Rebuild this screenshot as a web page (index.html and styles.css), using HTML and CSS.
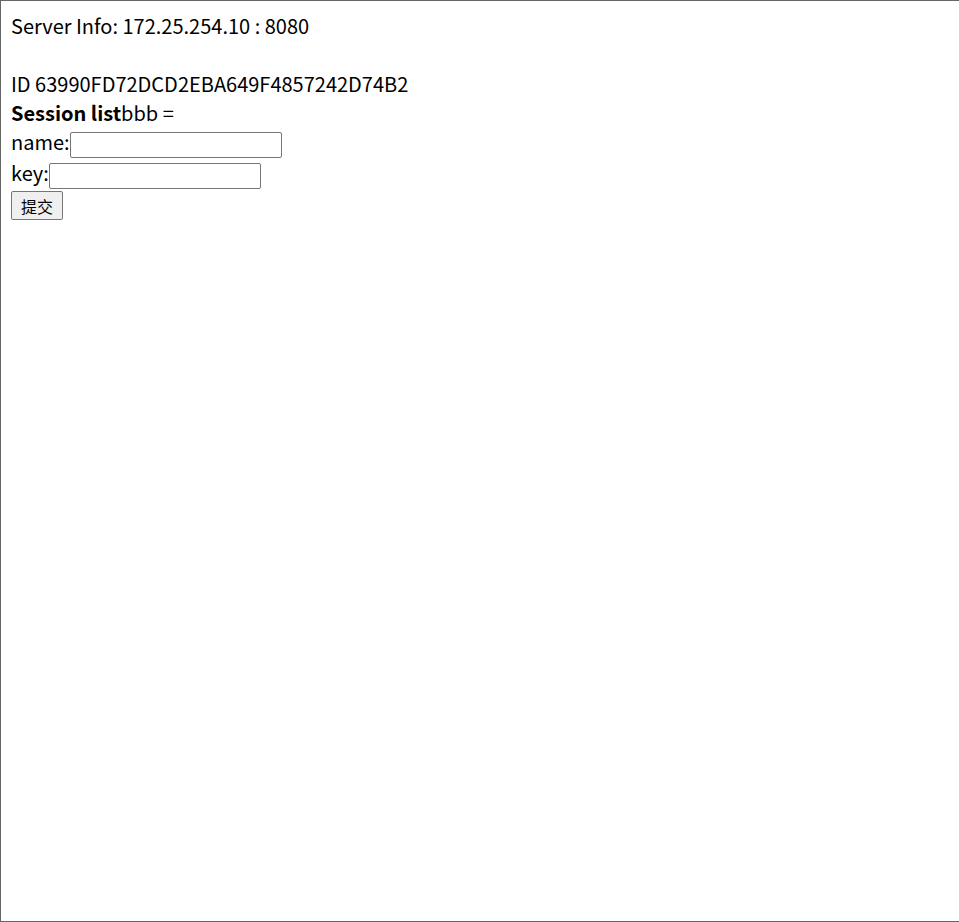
FILE: index.html
```html
<!DOCTYPE html>
<html lang="zh">

<head>
    <meta charset="UTF-8">
    <title>Session</title>
    <link rel="stylesheet" href="styles.css">
</head>

<body>
    <div class="frame">
        <p class="server-info">Server Info: 172.25.254.10 : 8080</p>
        <br>
        ID 63990FD72DCD2EBA649F4857242D74B2<br>
        <b>Session list</b>bbb =<br>
        <form class="session-form" action="#" method="post">
            <div class="field-row">name:<input type="text" name="name" class="text-input"></div>
            <div class="field-row">key:<input type="text" name="key" class="text-input"></div>
            <input type="submit" value="提交" class="submit-btn">
        </form>
    </div>
</body>

</html>
```

FILE: styles.css
```css
/* --- page frame --- */
html,
body {
    margin: 0;
    height: 100%;
    background: #fff;
}

.frame {
    box-sizing: border-box;
    width: 1000px;
    height: 922px;
    border: 1px solid #666;
    padding: 10px 10px;
    font-family: "Noto Sans CJK SC", "Noto Sans", sans-serif;
    font-size: 20px;
    line-height: 29px;
    color: #000;
}

.server-info {
    margin: 0;
}

/* --- form --- */
.session-form {
    margin: 0;
}

.field-row {
    display: flex;
    align-items: flex-start;
    height: 31px;
}

.text-input {
    width: 212px;
    height: 26px;
    box-sizing: border-box;
    border: 1px solid #767676;
    border-radius: 2px;
    font-size: 13px;
    margin: 5px 0 0;
}

.submit-btn {
    display: block;
    box-sizing: border-box;
    font-family: "Noto Sans CJK SC", sans-serif;
    font-size: 16px;
    line-height: 20px;
    padding: 1px 6px;
    height: 29px;
    width: 52px;
    margin: 2px 0 0;
    border: 1px solid #767676;
    border-radius: 2px;
    background: #efefef;
    color: #000;
}
```
